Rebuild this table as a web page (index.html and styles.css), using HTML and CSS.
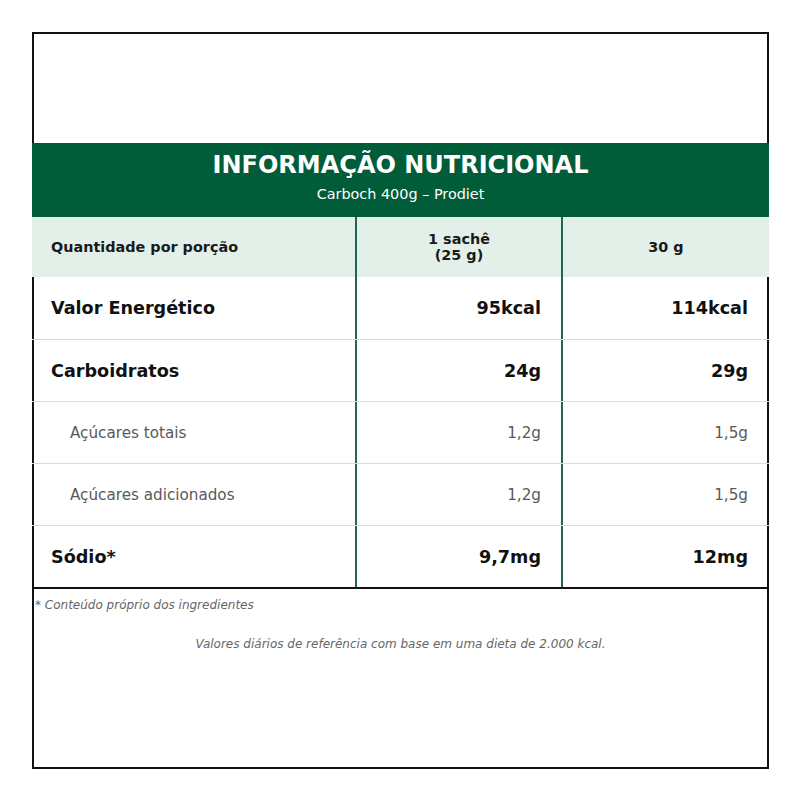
FILE: index.html
```html
<!DOCTYPE html>
<html lang="pt">
<head>
<meta charset="utf-8">
<link rel="stylesheet" href="styles.css">
</head>
<body>
<div class="box">
  <div class="spacer"></div>
  <div class="table">
    <div class="title">
      <h1>INFORMAÇÃO NUTRICIONAL</h1>
      <p>Carboch 400g – Prodiet</p>
    </div>
    <div class="row head">
      <div class="cell label">Quantidade por porção</div>
      <div class="cell center sep">1 sachê<br>(25 g)</div>
      <div class="cell center sep">30 g</div>
    </div>
    <div class="row main first">
      <div class="cell label">Valor Energético</div>
      <div class="cell num sep">95kcal</div>
      <div class="cell num sep">114kcal</div>
    </div>
    <div class="row main">
      <div class="cell label">Carboidratos</div>
      <div class="cell num sep">24g</div>
      <div class="cell num sep">29g</div>
    </div>
    <div class="row sub">
      <div class="cell label">Açúcares totais</div>
      <div class="cell num sep">1,2g</div>
      <div class="cell num sep">1,5g</div>
    </div>
    <div class="row sub">
      <div class="cell label">Açúcares adicionados</div>
      <div class="cell num sep">1,2g</div>
      <div class="cell num sep">1,5g</div>
    </div>
    <div class="row main last">
      <div class="cell label">Sódio*</div>
      <div class="cell num sep">9,7mg</div>
      <div class="cell num sep">12mg</div>
    </div>
  </div>
  <p class="note">* Conteúdo próprio dos ingredientes</p>
  <p class="ref">Valores diários de referência com base em uma dieta de 2.000 kcal.</p>
</div>
</body>
</html>
```

FILE: styles.css
```css
html, body {
  margin: 0;
  padding: 0;
  background: #fff;
}
body {
  padding: 32px;
  font-family: "DejaVu Sans", sans-serif;
  color: #111;
}
.box {
  width: 733px;
  height: 733px;
  border: 2px solid #111;
}
.spacer {
  height: 109px;
}
.table {
  margin: 0 -2px;
}
.title {
  background: #005c39;
  color: #fff;
  text-align: center;
  height: 74px;
  box-sizing: border-box;
  padding-top: 8px;
}
.title h1 {
  margin: 0;
  font-size: 24px;
  line-height: 28px;
  font-weight: bold;
}
.title p {
  margin: 6px 0 0;
  font-size: 14.4px;
  line-height: 18px;
}
.row {
  display: grid;
  grid-template-columns: 323px 206px 1fr;
  height: 62px;
  box-sizing: border-box;
  border-top: 1px solid #dcdcdc;
}
.row.first {
  border-top: none;
}
.row.head {
  background: #e3f0ea;
  height: 60px;
  border-top: none;
  font-size: 14.4px;
  font-weight: bold;
  color: #1a1a1a;
}
.row.last {
  border-bottom: 2px solid #111;
  height: 64px;
}
.cell {
  display: flex;
  align-items: center;
  padding: 0 20px;
}
.sep {
  border-left: 2px solid #236550;
}
.center {
  justify-content: center;
  text-align: center;
  line-height: 16px;
}
.num {
  justify-content: flex-end;
  padding-right: 20px;
}
.num:last-child {
  padding-right: 21px;
}
.row .label {
  padding-left: 19px;
}
.main {
  font-size: 17.6px;
  font-weight: bold;
  color: #111;
}
.sub {
  font-size: 15.2px;
  color: #595959;
}
.sub .label {
  padding-left: 38px;
}
.note {
  margin: 9px 0 0 1px;
  font-size: 12px;
  font-style: italic;
  color: #666;
}
.ref {
  margin: 25px 0 0;
  text-align: center;
  font-size: 12px;
  font-style: italic;
  color: #666;
}
```
